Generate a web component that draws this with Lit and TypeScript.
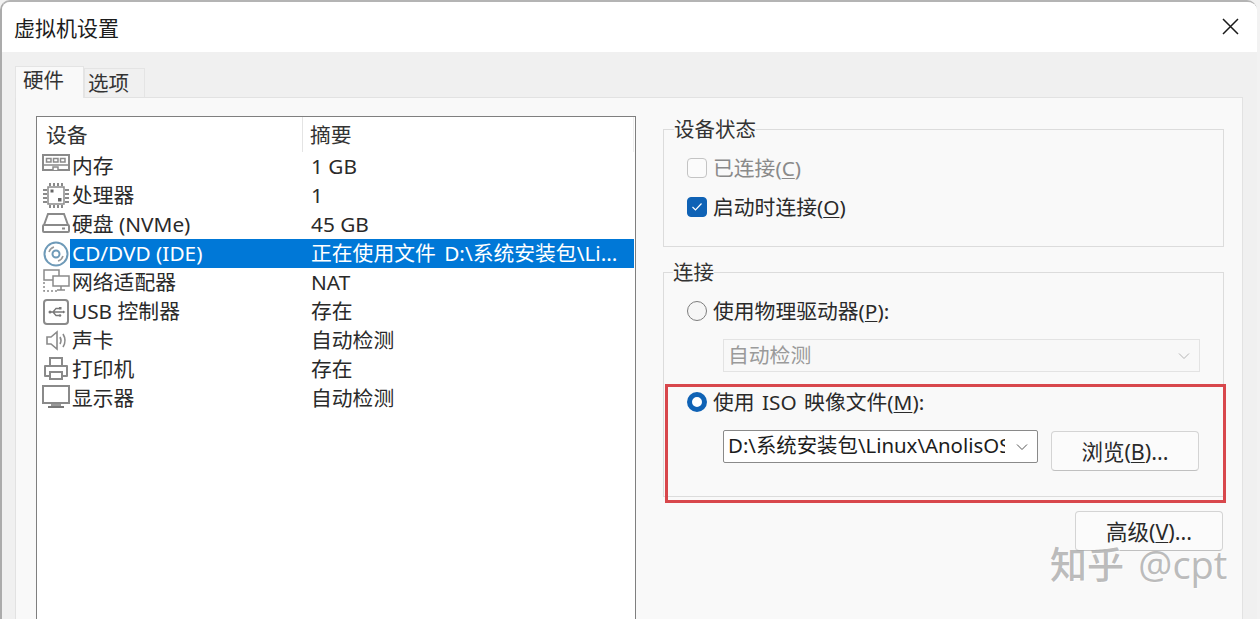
import { LitElement, html, css, svg } from "lit";
import { customElement } from "lit/decorators.js";

const ICONS: Record<string, unknown> = {
  memory: svg`<rect x="1" y="2" width="26" height="15" fill="none" stroke="#8a8a8a" stroke-width="2"/><path d="M2 12h24" stroke="#8a8a8a" stroke-width="1.5"/><path d="M4.500 5.500h4.500v3.500h-4.500zM11.500 5.500h4.500v3.500h-4.500zM18.500 5.500h4.500v3.500h-4.500z" fill="none" stroke="#8a8a8a" stroke-width="1.500"/><path d="M11 17v-3h5v3" fill="#fff" stroke="#8a8a8a" stroke-width="1.500"/>`,
  cpu: svg`<rect x="6" y="5" width="16" height="17" fill="none" stroke="#8a8a8a" stroke-width="1.500"/><path d="M8 1v3M12 1v3M16 1v3M20 1v3M8 23v3M12 23v3M16 23v3M20 23v3M1 8h4M1 12h4M1 16h4M1 20h4M23 8h4M23 12h4M23 16h4M23 20h4" stroke="#8a8a8a" stroke-width="2"/><rect x="8.500" y="7.500" width="3" height="3" fill="#666"/><rect x="16" y="16" width="3.500" height="3.500" fill="#666"/>`,
  disk: svg`<path d="M2 14 6 3h16l4 11" fill="none" stroke="#8a8a8a" stroke-width="2"/><rect x="1" y="14" width="26" height="7" rx="1" fill="none" stroke="#8a8a8a" stroke-width="2"/><rect x="20" y="16.500" width="3" height="2" fill="#8a8a8a"/>`,
  cd: svg`<circle cx="14" cy="14" r="11.500" fill="none" stroke="#6e9ab8" stroke-width="2"/><circle cx="14" cy="14" r="3.500" fill="none" stroke="#6e9ab8" stroke-width="2"/><path d="M7 12a7.500 7.500 0 0 1 5-5M21 16a7.500 7.500 0 0 1-5 5" fill="none" stroke="#9a9a9a" stroke-width="1.500"/>`,
  net: svg`<rect x="2" y="1" width="15" height="10" fill="#fff" stroke="#8a8a8a" stroke-width="1.500"/><rect x="11" y="7" width="16" height="10" fill="#fff" stroke="#8a8a8a" stroke-width="1.500"/><path d="M19 17v4M15 21h8" stroke="#8a8a8a" stroke-width="1.500"/><path d="M2 13v9h13" fill="none" stroke="#8a8a8a" stroke-width="1.500" stroke-dasharray="2 2"/>`,
  usb: svg`<rect x="2" y="2" width="24" height="24" rx="3" fill="none" stroke="#8a8a8a" stroke-width="2"/><path d="M7 14h14M11 14l3-3.500h3M11 14l3 3.500h3" fill="none" stroke="#777" stroke-width="1.300"/><circle cx="8" cy="14" r="1.500" fill="#777"/><rect x="17" y="9" width="2.500" height="2.500" fill="#777"/><circle cx="18" cy="17.500" r="1.300" fill="#777"/><path d="M21 12.500 23.500 14 21 15.500z" fill="#777"/>`,
  sound: svg`<path d="M5 10v7h4l6 5V5l-6 5z" fill="none" stroke="#8a8a8a" stroke-width="1.600"/><path d="M18 10q2 3.500 0 7M21 7q4 6.500 0 13" fill="none" stroke="#8a8a8a" stroke-width="1.600"/>`,
  printer: svg`<path d="M8 9V2h12v7" fill="none" stroke="#8a8a8a" stroke-width="2"/><path d="M7 20H3V10h22v10h-4" fill="none" stroke="#8a8a8a" stroke-width="2" stroke-linejoin="round"/><rect x="8" y="16" width="12" height="7" fill="none" stroke="#8a8a8a" stroke-width="2"/>`,
  monitor: svg`<rect x="1" y="1" width="26" height="17" fill="none" stroke="#8a8a8a" stroke-width="2"/><rect x="9" y="19" width="10" height="2" fill="#999"/><rect x="6" y="21" width="16" height="2" fill="#777"/>`,
};

const DEVICES = [
  ["memory", "内存", "1 GB"],
  ["cpu", "处理器", "1"],
  ["disk", "硬盘 (NVMe)", "45 GB"],
  ["cd", "CD/DVD (IDE)", "正在使用文件 D:\\系统安装包\\Li..."],
  ["net", "网络适配器", "NAT"],
  ["usb", "USB 控制器", "存在"],
  ["sound", "声卡", "自动检测"],
  ["printer", "打印机", "存在"],
  ["monitor", "显示器", "自动检测"],
];

const chevron = html`<svg class="chev" width="12" height="8" viewBox="0 0 12 8"><path d="M1 1.500 6 6.500 11 1.500" fill="none" stroke="currentColor" stroke-width="1"/></svg>`;

@customElement("app-root")
export class AppRoot extends LitElement {
  static styles = css`
    :host {
      display: block;
      width: 1260px;
      height: 619px;
      overflow: hidden;
      position: relative;
      background: #f2f2f2;
      font-family: "Noto Sans", "Noto Sans CJK SC", sans-serif;
      font-size: 20.8px;
      color: #1c1c1c;
    }
    .window {
      width: 1257px;
      height: 619px;
      box-sizing: border-box;
      border-top: 2px solid #b4b4b4;
      border-left: 2px solid #ababab;
      border-top-left-radius: 10px;
      border-top-right-radius: 10px;
      background: #f0f0f0;
      overflow: hidden;
      display: flex;
      flex-direction: column;
    }
    .titlebar {
      flex: none;
      height: 50px;
      background: #fff;
      display: flex;
      align-items: center;
      justify-content: space-between;
      padding: 0 18px 0 12px;
      font-size: 21px;
    }
    .titlebar svg { display: block; margin-top: -2px; }
    .body {
      flex: 1;
      min-height: 0;
      padding: 13px 14px 0 13px;
      display: flex;
      flex-direction: column;
    }
    .tabs { display: flex; flex: none; height: 32px; align-items: flex-end; }
    .tab {
      box-sizing: border-box;
      border: 1px solid #e4e4e4;
      border-bottom: none;
      display: flex;
      align-items: center;
      font-size: 20.500px;
    }
    .tab.on {
      width: 69px;
      height: 32px;
      background: #f9f9f9;
      margin-bottom: -1px;
      padding: 0 0 7px 7px;
      position: relative;
      color: #333;
    }
    .tab.off {
      width: 61px;
      height: 29px;
      background: #f0f0f0;
      color: #333;
      padding: 0 0 2px 3px;
    }
    .panel {
      flex: 1;
      min-height: 0;
      box-sizing: border-box;
      border: 1px solid #e2e2e2;
      border-bottom: none;
      background: #f9f9f9;
      padding: 18px 0 0 20px;
      display: flex;
      gap: 27px;
    }
    .list {
      flex: none;
      box-sizing: border-box;
      width: 600px;
      height: 520px;
      border: 1px solid #7f7f7f;
      background: #fff;
    }
    .head { display: flex; height: 35px; align-items: center; color: #333; }
    .head div:first-child { width: 265px; box-sizing: border-box; padding: 0 0 2px 9px; height: 100%; display: flex; align-items: center; }
    .head div:last-child {
      flex: 1;
      height: 100%;
      margin-right: 1px;
      box-sizing: border-box;
      padding: 0 0 2px 7px;
      display: flex;
      align-items: center;
      border-left: 1px solid #e4e4e4;
      border-right: 1px solid #eee;
    }
    .row { display: flex; height: 29px; line-height: 29px; margin-right: 1px; white-space: nowrap; }
    .icon { flex: none; width: 33px; display: flex; align-items: center; padding-left: 5px; box-sizing: border-box; }
    .icon svg { display: block; }
    .name { width: 233px; flex: none; padding-left: 2px; box-sizing: border-box; color: #2a2a2a; }
    .sum { flex: 1; padding-left: 8px; color: #2a2a2a; }
    .row.sel .name, .row.sel .sum { background: #0078d7; color: #fff; }
    .row.sel .sum { word-spacing: 3px; }
    .right { flex: none; width: 561px; display: flex; flex-direction: column; }
    fieldset {
      margin: 0;
      border: 1px solid #dcdcdc;
      min-width: 0;
      display: flex;
      flex-direction: column;
    }
    legend { padding: 0; height: 26px; line-height: 26px; color: #333; font-size: 20.500px; }
    .status { padding: 16px 23px 29px; }
    .status legend { margin-left: -13px; }
    .conn { margin-top: 12px; padding: 16px 23px 25px; }
    .conn legend { margin-left: -14px; }
    .opt { display: flex; align-items: center; gap: 6px; height: 20px; white-space: nowrap; color: #2a2a2a; }
    .opt > span:last-child { line-height: 20px; word-spacing: 2px; }
    .opt + .opt { margin-top: 19px; }
    .opt.dis { color: #8a8a8a; }
    .box { flex: none; width: 20px; height: 20px; box-sizing: border-box; border-radius: 4px; border: 1px solid #c4c4c4; background: #fbfbfb; display: flex; align-items: center; justify-content: center; }
    .box.on { background: #0f62b5; border-color: #0f62b5; }
    .radio { flex: none; width: 20px; height: 20px; box-sizing: border-box; border-radius: 50%; border: 1.500px solid #7d7d7d; background: #f6f6f6; }
    .radio.on { border: 5.500px solid #0f62b5; background: #fff; }
    u { text-underline-offset: 2px; text-decoration-thickness: 1px; }
    .select {
      box-sizing: border-box;
      display: flex;
      align-items: center;
      justify-content: space-between;
      height: 33px;
      margin-left: 36px;
      padding: 0 9px 0 4px;
      white-space: nowrap;
    }
    .select.dis {
      width: 477px;
      margin-top: 18px;
      margin-bottom: 20px;
      border: 1px solid #e3e3e3;
      color: #9a9a9a;
      background: #f8f8f8;
    }
    .select.dis span { margin-top: -3px; }
    .select.dis .chev { color: #b5b5b5; }
    .pick { display: flex; align-items: flex-start; margin-top: 18px; }
    .pick .select {
      width: 315px;
      border: 1px solid #8a8a8a;
      border-radius: 2px;
      background: #fff;
      color: #1c1c1c;
    }
    .pick .select span { width: 277px; overflow: hidden; line-height: 30px; margin-top: -3px; font-size: 20.400px; }
    .pick .chev { color: #555; }
    button {
      font: inherit;
      font-size: 21.500px;
      color: #2a2a2a;
      width: 148px;
      height: 40px;
      box-sizing: border-box;
      border: 1px solid #d4d4d4;
      border-bottom-color: #c0c0c0;
      border-radius: 4px;
      background: #fbfbfb;
      padding: 0 0 2px;
    }
    .pick button { margin: 1px 0 0 13px; }
    .adv { align-self: flex-end; margin: 14px 1px 0 0; }
    .mark {
      position: absolute;
      left: 665px;
      top: 384px;
      width: 561px;
      height: 119px;
      box-sizing: border-box;
      border: 3px solid #d8474c;
      pointer-events: none;
    }
    .zhihu {
      position: absolute;
      left: 1050px;
      top: 538px;
      font-family: "Noto Sans CJK SC", sans-serif;
      font-size: 37px;
      font-weight: 500;
      line-height: 50px;
      white-space: nowrap;
      color: rgba(170, 170, 170, 0.8);
      text-shadow: 1px 1px 0 rgba(255, 255, 255, 0.7);
      word-spacing: 6px;
    }
    .zhihu span { font-family: "Open Sans", sans-serif; font-size: 38px; }
  `;

  render() {
    return html`
      <div class="window">
        <div class="titlebar">
          <span>虚拟机设置</span>
          <svg width="17" height="17" viewBox="0 0 17 17"><path d="M1 1 16 16M16 1 1 16" stroke="#1a1a1a" stroke-width="1.500"/></svg>
        </div>
        <div class="body">
          <div class="tabs">
            <div class="tab on">硬件</div>
            <div class="tab off">选项</div>
          </div>
          <div class="panel">
            <div class="list">
              <div class="head"><div>设备</div><div>摘要</div></div>
              ${DEVICES.map(
                ([icon, name, sum]) => html`
                  <div class="row ${icon === "cd" ? "sel" : ""}">
                    <div class="icon">
                      <svg width="28" height="28" viewBox="0 0 28 28">${ICONS[icon]}</svg>
                    </div>
                    <div class="name">${name}</div>
                    <div class="sum">${sum}</div>
                  </div>
                `
              )}
            </div>
            <div class="right">
              <fieldset class="status">
                <legend>设备状态</legend>
                <div class="opt dis"><span class="box"></span><span>已连接(<u>C</u>)</span></div>
                <div class="opt">
                  <span class="box on">
                    <svg width="12" height="10" viewBox="0 0 12 10"><path d="M1.500 5 4.500 8 10.500 1.500" fill="none" stroke="#fff" stroke-width="1.200"/></svg>
                  </span>
                  <span>启动时连接(<u>O</u>)</span>
                </div>
              </fieldset>
              <fieldset class="conn">
                <legend>连接</legend>
                <div class="opt"><span class="radio"></span><span>使用物理驱动器(<u>P</u>):</span></div>
                <div class="select dis"><span>自动检测</span>${chevron}</div>
                <div class="opt"><span class="radio on"></span><span>使用 ISO 映像文件(<u>M</u>):</span></div>
                <div class="pick">
                  <div class="select"><span>D:\\系统安装包\\Linux\\AnolisOS</span>${chevron}</div>
                  <button>浏览(<u>B</u>)...</button>
                </div>
              </fieldset>
              <button class="adv">高级(<u>V</u>)...</button>
            </div>
          </div>
        </div>
      </div>
      <div class="mark"></div>
      <div class="zhihu">知乎 <span>@cpt</span></div>
    `;
  }
}
